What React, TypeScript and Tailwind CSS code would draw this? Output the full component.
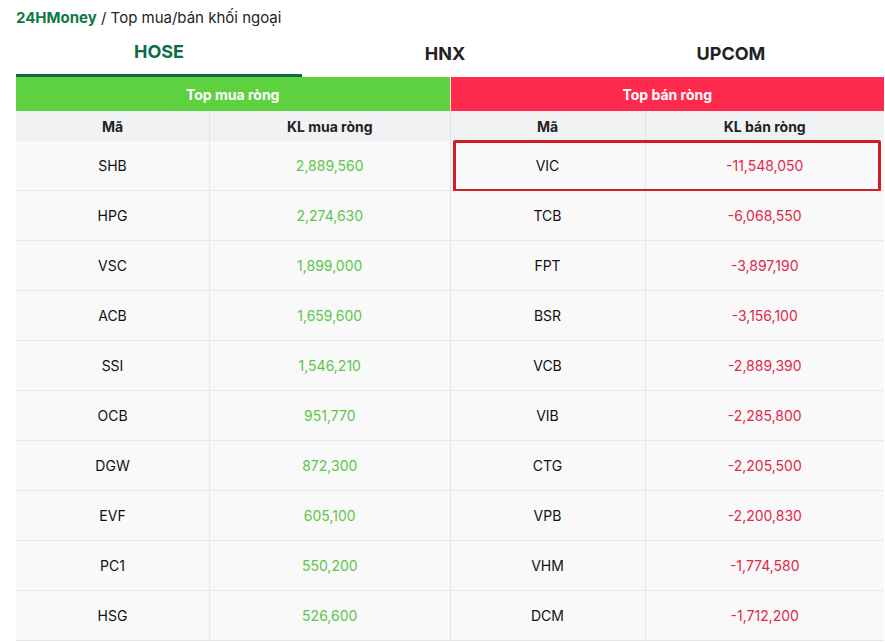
import React from "react";

const buy = [["SHB","2,889,560"],["HPG","2,274,630"],["VSC","1,899,000"],["ACB","1,659,600"],["SSI","1,546,210"],["OCB","951,770"],["DGW","872,300"],["EVF","605,100"],["PC1","550,200"],["HSG","526,600"]];
const sell = [["VIC","-11,548,050"],["TCB","-6,068,550"],["FPT","-3,897,190"],["BSR","-3,156,100"],["VCB","-2,889,390"],["VIB","-2,285,800"],["CTG","-2,205,500"],["VPB","-2,200,830"],["VHM","-1,774,580"],["DCM","-1,712,200"]];

function Table({ title, head, rows, green, first }: { title: string; head: string; rows: string[][]; green: boolean; first: boolean }) {
  return (
    <div className={`flex-1 flex flex-col ${first ? "border-r border-[#e3e3e3]" : ""}`}>
      <div className={`h-[34px] flex items-center justify-center text-white font-bold text-[14px] ${green ? "bg-[#5dd140]" : "bg-[#ff2b4e]"}`}>{title}</div>
      <div className="h-[30px] flex bg-[#f1f2f4] text-[14px] font-bold text-[#222]">
        <div className={`${first ? "w-[194px]" : "w-[195px]"} flex items-center justify-center border-r border-[#e3e3e3]`}>Mã</div>
        <div className="flex-1 flex items-center justify-center">{head}</div>
      </div>
      {rows.map(([c, v], i) => (
        <div key={c} className="relative h-[50px] flex bg-[#f9f9f9] border-b border-[#e8e8e8] text-[14px]">
          <div className={`${first ? "w-[194px]" : "w-[195px]"} flex items-center justify-center border-r border-[#e8e8e8] text-[#111]`}>{c}</div>
          <div className={`flex-1 flex items-center justify-center ${green ? "text-[#5cc64a]" : "text-[#e0284a]"}`}>{v}</div>
          {!first && i === 0 && <div className="absolute left-[2px] right-[3px] top-[-1px] bottom-[-2px] border-[3px] border-[#d01c24] rounded-[2px]" />}
        </div>
      ))}
    </div>
  );
}

export default function App() {
  return (
    <div className="w-[885px] h-[643px] bg-white overflow-hidden pl-4 pt-[7px]" style={{ fontFamily: "Inter, 'Liberation Sans', sans-serif" }}>
      <div className="text-[15px] text-[#222] h-[22px]"><span className="font-bold text-[#0d7a45]">24HMoney</span> / Top mua/bán khối ngoại</div>
      <div className="flex h-[48px] text-[18px] font-bold">
        <div className="w-[286px] flex items-center justify-center text-[#0d6b45] border-b-[3px] border-[#0d6b45]">HOSE</div>
        <div className="w-[286px] flex items-center justify-center text-[#222]">HNX</div>
        <div className="w-[286px] flex items-center justify-center text-[#222]">UPCOM</div>
      </div>
      <div className="flex w-[868px]">
        <Table title="Top mua ròng" head="KL mua ròng" rows={buy} green first />
        <Table title="Top bán ròng" head="KL bán ròng" rows={sell} green={false} first={false} />
      </div>
    </div>
  );
}
